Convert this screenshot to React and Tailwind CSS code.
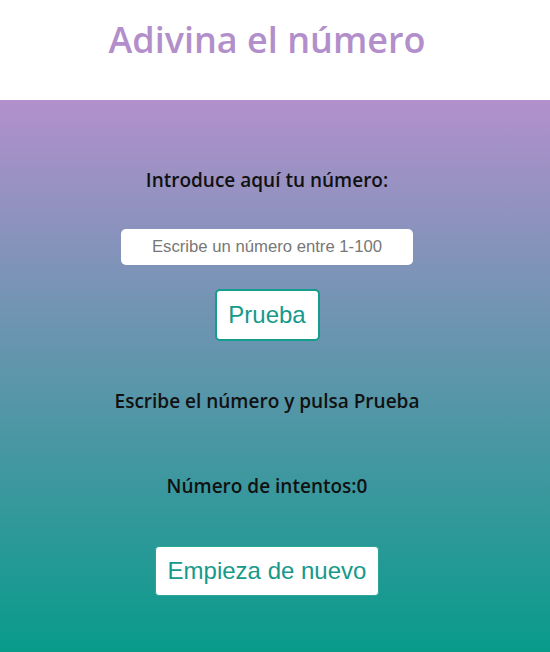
import React, { useState } from "react";

const App = () => {
  const [guess, setGuess] = useState("");
  const [attempts] = useState(0);

  return (
    <div className="w-[550px] h-[652px] flex flex-col font-['Open_Sans',sans-serif]">
      {/* Header */}
      <header className="h-[100px] bg-white flex justify-center pr-4 pt-[15px]">
        <h1 className="text-[36px] leading-[49px] font-semibold text-[#b28fca]">Adivina el número</h1>
      </header>

      {/* Game area */}
      <main className="flex-1 flex flex-col items-center pr-4 pt-[67px] bg-linear-to-b/srgb from-[#b290cc] to-[#089b8a]">
        <p className="text-[19px] leading-[27px] font-semibold text-[#111]">Introduce aquí tu número:</p>

        <input
          type="text"
          value={guess}
          onChange={(e) => setGuess(e.target.value)}
          placeholder="Escribe un número entre 1-100"
          className="mt-[35px] w-[292px] h-[36px] rounded-[5px] bg-white text-center text-[16.7px] font-['Liberation_Sans',Arial,sans-serif] text-[#333] placeholder:text-[#777] outline-none"
        />

        <button className="mt-[24px] w-[105px] h-[52px] rounded-[5px] border-2 border-[#149c8c] bg-white text-[24px] font-['Liberation_Sans',Arial,sans-serif] text-[#16998a]">
          Prueba
        </button>

        <p className="mt-[47px] text-[19px] leading-[27px] font-semibold text-[#111]">Escribe el número y pulsa Prueba</p>

        <p className="mt-[58px] text-[19px] leading-[27px] font-semibold text-[#111]">Número de intentos:{attempts}</p>

        <button className="mt-[46px] w-[224px] h-[50px] rounded-[4px] border border-[#2aa596] bg-white text-[24px] font-['Liberation_Sans',Arial,sans-serif] text-[#16998a]">
          Empieza de nuevo
        </button>
      </main>
    </div>
  );
};

export default App;
